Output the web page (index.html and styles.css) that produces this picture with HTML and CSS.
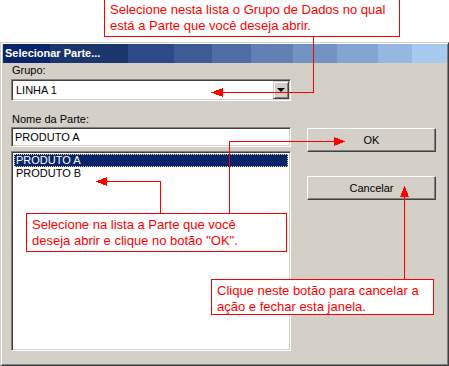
FILE: index.html
```html
<!DOCTYPE html>
<html lang="pt-BR">
<head>
    <meta charset="UTF-8">
    <title>Selecionar Parte</title>
    <link rel="stylesheet" href="styles.css">
</head>
<body>
    <div class="page">
        <div class="dialog">
            <div class="titlebar">Selecionar Parte...</div>
            <div class="dialog-body">
                <div class="col-left">
                    <label class="lbl">Grupo:</label>
                    <div class="combo">
                        <span class="combo-value">LINHA 1</span>
                        <span class="combo-btn"><i class="combo-arrow"></i></span>
                    </div>
                    <label class="lbl lbl-name">Nome da Parte:</label>
                    <div class="field">PRODUTO A</div>
                    <ul class="listbox">
                        <li class="selected">PRODUTO A</li>
                        <li>PRODUTO B</li>
                    </ul>
                </div>
                <div class="col-right">
                    <button class="btn">OK</button>
                    <button class="btn btn-cancel">Cancelar</button>
                </div>
            </div>
        </div>

        <!-- setas vermelhas das explicações -->
        <svg class="arrows" width="449" height="366" viewBox="0 0 449 366">
            <g fill="none" stroke="#ff0000" stroke-width="1">
                <polyline points="313.5,37 313.5,92.5 222,92.5"/>
                <polyline points="160.5,213 160.5,181.5 106,181.5"/>
                <polyline points="229.5,213 229.5,141.5 334,141.5"/>
                <polyline points="404.5,279 404.5,196"/>
            </g>
            <g fill="#ff0000">
                <polygon points="211,92.5 223,88 223,97"/>
                <polygon points="96,181.5 107,177 107,186"/>
                <polygon points="345,141.5 334,137 334,146"/>
                <polygon points="404.5,186 400,197 409,197"/>
            </g>
        </svg>

        <div class="note note-group">Selecione nesta lista o Grupo de Dados no qual<br>está a Parte que você deseja abrir.</div>
        <div class="note note-list">Selecione na lista a Parte que você<br>deseja abrir e clique no botão "OK".</div>
        <div class="note note-cancel">Clique neste botão para cancelar a<br>ação e fechar esta janela.</div>
    </div>
</body>
</html>
```

FILE: styles.css
```css
* {
    margin: 0;
    padding: 0;
}

body {
    background: #fff;
    font-family: "Liberation Sans", Arial, sans-serif;
    font-size: 11px;
    color: #000;
}

.page {
    position: relative;
    width: 449px;
    height: 366px;
    overflow: hidden;
}

.dialog {
    margin-top: 42px;
    width: 449px;
    height: 324px;
    box-sizing: border-box;
    background: #d4d0c8;
    border: 1px solid;
    border-color: #d4d0c8 #404040 #404040 #d4d0c8;
    box-shadow: inset 1px 1px #fff, inset -1px -1px #808080;
    padding: 1px 1px 0 2px;
}

.titlebar {
    height: 19px;
    line-height: 19px;
    padding-left: 2px;
    color: #fff;
    font-weight: bold;
    background: linear-gradient(to right,
        #0a246a 0, #0a246a 47px,
        #1b366d 47px, #1b366d 125px,
        #2d4988 125px, #2d4988 171px,
        #3e5b97 171px, #3e5b97 209px,
        #4f6ea6 209px, #4f6ea6 248px,
        #6180b5 248px, #6180b5 290px,
        #7293c3 290px, #7293c3 334px,
        #83a5d2 334px, #83a5d2 375px,
        #95b8e1 375px, #95b8e1 409px,
        #a6caf0 409px);
}

.dialog-body {
    display: flex;
    padding: 1px 0 0 8px;
}

.col-left {
    width: 280px;
    display: flex;
    flex-direction: column;
}

.lbl {
    display: block;
    height: 13px;
    line-height: 13px;
    padding-left: 1px;
}

.lbl-name {
    margin-top: 12px;
}

/* bordas afundadas estilo windows classico */
.combo,
.field,
.listbox {
    box-sizing: border-box;
    background: #fff;
    border: 1px solid;
    border-color: #808080 #fff #fff #808080;
    box-shadow: inset 1px 1px #404040, inset -1px -1px #d4d0c8;
}

.combo {
    margin-top: 2px;
    height: 22px;
    padding: 1px;
    display: flex;
}

.combo-value {
    flex: 1;
    line-height: 18px;
    padding-left: 3px;
}

.combo-btn {
    width: 16px;
    height: 18px;
    box-sizing: border-box;
    background: #d4d0c8;
    border: 1px solid;
    border-color: #d4d0c8 #404040 #404040 #d4d0c8;
    box-shadow: inset 1px 1px #fff, inset -1px -1px #808080;
    display: flex;
    align-items: center;
    justify-content: center;
}

.combo-arrow {
    width: 0;
    height: 0;
    border-left: 4px solid transparent;
    border-right: 4px solid transparent;
    border-top: 4px solid #000;
}

.field {
    margin-top: 1px;
    height: 20px;
    padding: 1px 3px;
    line-height: 16px;
}

.listbox {
    margin-top: 4px;
    height: 200px;
    padding: 2px;
    list-style: none;
}

.listbox li {
    height: 13px;
    line-height: 13px;
    padding-left: 2px;
}

.listbox li.selected {
    background: #0a246a;
    color: #fff;
    outline: 1px dotted #e8d890;
    outline-offset: -1px;
}

.col-right {
    margin-left: 16px;
    padding-top: 64px;
    display: flex;
    flex-direction: column;
}

.btn {
    width: 129px;
    height: 24px;
    box-sizing: border-box;
    background: #d4d0c8;
    border: 1px solid;
    border-color: #fff #404040 #404040 #fff;
    box-shadow: inset -1px -1px #808080;
    font-family: inherit;
    font-size: 11px;
    color: #000;
}

.btn-cancel {
    margin-top: 24px;
}

.arrows {
    position: absolute;
    left: 0;
    top: 0;
    shape-rendering: crispEdges;
}

.note {
    position: absolute;
    box-sizing: border-box;
    background: #fff;
    border: 1px solid #ff0000;
    color: #ff0000;
    font-size: 13px;
    line-height: 16px;
    padding: 3px 5px;
    white-space: nowrap;
}

.note-group {
    left: 104px;
    top: -2px;
    width: 296px;
    height: 39px;
}

.note-list {
    left: 26px;
    top: 213px;
    width: 261px;
    height: 39px;
}

.note-cancel {
    left: 211px;
    top: 279px;
    width: 223px;
    height: 36px;
}
```
